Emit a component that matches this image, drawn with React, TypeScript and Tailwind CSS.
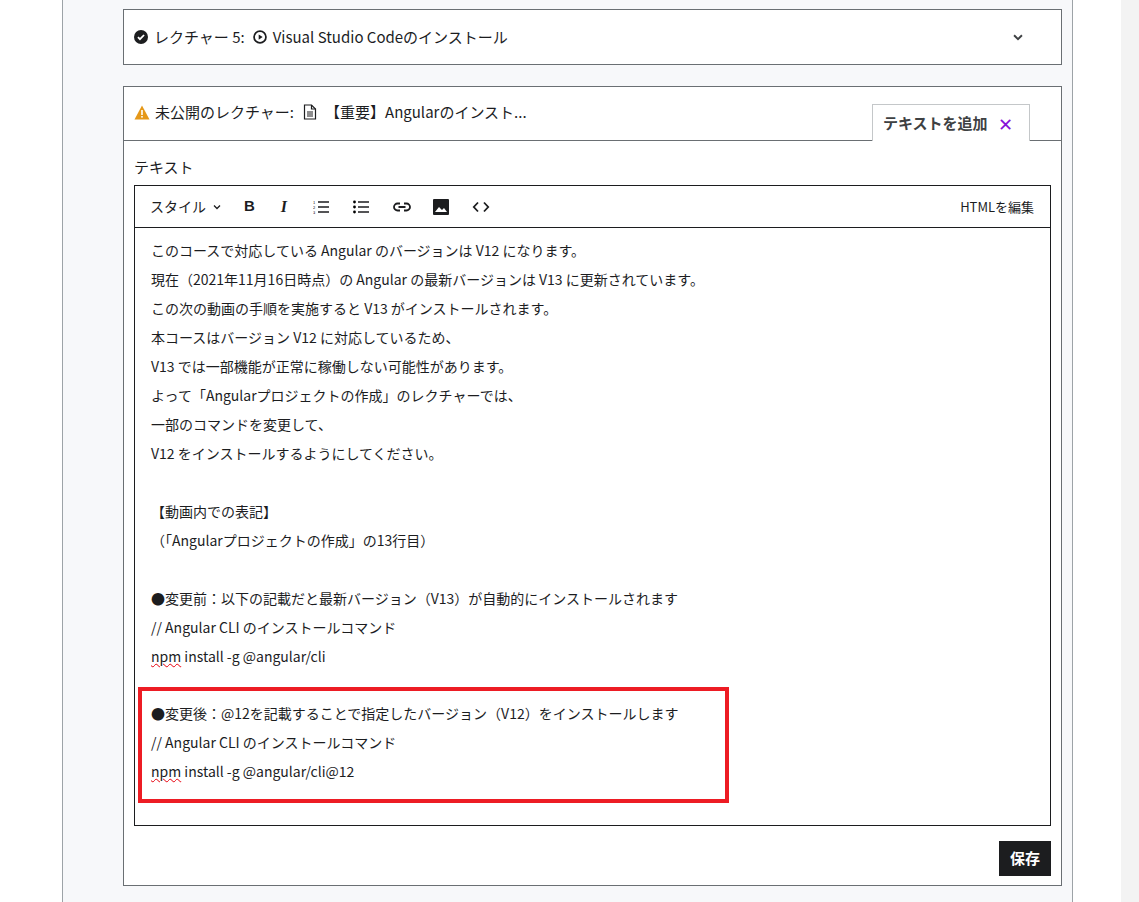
import React from "react";

const lines1 = [
  "このコースで対応している Angular のバージョンは V12 になります。",
  "現在（2021年11月16日時点）の Angular の最新バージョンは V13 に更新されています。",
  "この次の動画の手順を実施すると V13 がインストールされます。",
  "本コースはバージョン V12 に対応しているため、",
  "V13 では一部機能が正常に稼働しない可能性があります。",
  "よって「Angularプロジェクトの作成」のレクチャーでは、",
  "一部のコマンドを変更して、",
  "V12 をインストールするようにしてください。",
  "",
  "【動画内での表記】",
  "（「Angularプロジェクトの作成」の13行目）",
  "",
  "●変更前：以下の記載だと最新バージョン（V13）が自動的にインストールされます",
  "// Angular CLI のインストールコマンド",
];

const Npm = ({ rest }: { rest: string }) => (
  <div className="h-[29px] leading-[29px]">
    <span className="underline decoration-wavy decoration-red-600 decoration-1">npm</span> {rest}
  </div>
);

export default function App() {
  return (
    <div
      className="w-[1139px] h-[902px] bg-white flex overflow-hidden text-[#1c1d1f]"
      style={{ fontFamily: '"Noto Sans CJK JP", "Noto Sans", sans-serif' }}
    >
      <div className="w-[62px]" />
      <div className="w-[1011px] bg-[#f7f8fa] border-x border-[#9da3a7] pl-[60px] pr-[10px] pt-[9px] flex flex-col">
        <div className="h-[56px] bg-white border border-[#6a6f73] flex items-center pl-[10px] pr-[36px] text-[15px]">
          <svg width="14" height="14" viewBox="0 0 16 16" className="mr-[6px]">
            <circle cx="8" cy="8" r="8" fill="#1c1d1f" />
            <path d="M4.5 8.2l2.3 2.3 4.7-4.8" stroke="white" strokeWidth="2" fill="none" />
          </svg>
          <span>レクチャー 5:</span>
          <svg width="14" height="14" viewBox="0 0 16 16" className="ml-[8px] mr-[6px]">
            <circle cx="8" cy="8" r="6.8" fill="none" stroke="#1c1d1f" strokeWidth="2" />
            <path d="M6.5 5v6l4.5-3z" fill="#1c1d1f" />
          </svg>
          <span>Visual Studio Codeのインストール</span>
          <svg width="14" height="14" viewBox="0 0 16 16" className="ml-auto">
            <path d="M3.5 6l4.5 4.5L12.5 6" stroke="#3e4143" strokeWidth="2.2" fill="none" />
          </svg>
        </div>
        <div className="mt-[21px] h-[800px] bg-white border border-[#6a6f73] flex flex-col">
          <div className="h-[54px] flex items-end border-b border-[#6a6f73] relative">
            <div className="absolute left-[10px] top-[14px] flex items-center text-[15px]">
              <svg width="16" height="15" viewBox="0 0 16 15" className="mr-[5px]">
                <path d="M8 0.5L15.5 14.5H0.5z" fill="#e59819" />
                <rect x="7.2" y="5" width="1.6" height="5" fill="white" />
                <rect x="7.2" y="11" width="1.6" height="1.6" fill="white" />
              </svg>
              <span>未公開のレクチャー:</span>
              <svg width="14" height="16" viewBox="0 0 14 16" className="ml-[9px] mr-[8px]">
                <path d="M1.5 1h7l4 4v10h-11z" fill="none" stroke="#1c1d1f" strokeWidth="1.2" />
                <path d="M8.5 1v4h4" fill="none" stroke="#1c1d1f" strokeWidth="1.2" />
                <path d="M4 8h6M4 10h6M4 12h6" stroke="#1c1d1f" strokeWidth="1" />
              </svg>
              <span>【重要】Angularのインスト...</span>
            </div>
            <div className="ml-auto mr-[31px] mb-[-1px] h-[37px] w-[158px] bg-white border border-b-0 border-[#c4c7c9] flex items-center pl-[10px] gap-[10px] text-[15px] font-bold text-[#3e4143]">
              テキストを追加
              <span className="text-[#8710d8] font-normal text-[18px] leading-none">✕</span>
            </div>
          </div>
          <div className="px-[10px] pt-[14px] flex flex-col">
            <div className="text-[15px] h-[30px] leading-[24px]">テキスト</div>
            <div className="h-[641px] border border-[#1c1d1f] flex flex-col">
              <div className="h-[42px] border-b border-[#1c1d1f] flex items-center pl-[15px] pr-[16px] text-[#1c1d1f]">
                <span className="text-[14px]">スタイル</span>
                <svg width="10" height="10" viewBox="0 0 10 10" className="ml-[6px]"><path d="M2 3.5l3 3 3-3" stroke="#1c1d1f" strokeWidth="1.3" fill="none" /></svg>
                <span className="ml-[22px] font-bold text-[15px]" style={{ fontFamily: '"Liberation Sans", sans-serif' }}>B</span>
                <span className="ml-[26px] font-bold italic text-[16px]" style={{ fontFamily: '"Liberation Serif", serif' }}>I</span>
                <svg width="16" height="14" viewBox="0 0 16 14" className="ml-[26px]"><path d="M5 2h11M5 7h11M5 12h11" stroke="#1c1d1f" strokeWidth="1.6" /><text x="0" y="4" fontSize="4">1</text><text x="0" y="9" fontSize="4">2</text><text x="0" y="14" fontSize="4">3</text></svg>
                <svg width="16" height="14" viewBox="0 0 16 14" className="ml-[24px]"><path d="M5 2h11M5 7h11M5 12h11" stroke="#1c1d1f" strokeWidth="1.6" /><circle cx="1.5" cy="2" r="1.4" /><circle cx="1.5" cy="7" r="1.4" /><circle cx="1.5" cy="12" r="1.4" /></svg>
                <svg width="18" height="10" viewBox="0 0 18 10" className="ml-[24px]"><path d="M7 1.5H4.5a3.5 3.5 0 0 0 0 7H7M11 1.5h2.5a3.5 3.5 0 0 1 0 7H11M5.5 5h7" stroke="#1c1d1f" strokeWidth="1.8" fill="none" /></svg>
                <svg width="16" height="16" viewBox="0 0 16 16" className="ml-[22px]"><rect x="0" y="0" width="16" height="16" rx="1" fill="#1c1d1f" /><path d="M2 13l4-5 3 3 2-2 3 4z" fill="white" /></svg>
                <svg width="18" height="12" viewBox="0 0 18 12" className="ml-[23px]"><path d="M6 1.5L1.8 6 6 10.5M12 1.5L16.2 6 12 10.5" stroke="#1c1d1f" strokeWidth="1.8" fill="none" /></svg>
                <span className="ml-auto text-[13px]">HTMLを編集</span>
              </div>
              <div className="pl-[16px] pt-[8px] text-[14px]">
                {lines1.map((l, i) => (
                  <div key={i} className="h-[29px] leading-[29px]">{l || "\u00a0"}</div>
                ))}
                <Npm rest="install -g @angular/cli" />
                <div className="ml-[-13px] mt-[16px] w-[591px] h-[116px] border-[4px] border-[#ed1c24] pl-[9px] pt-[8px]">
                  <div className="h-[29px] leading-[29px]">●変更後：@12を記載することで指定したバージョン（V12）をインストールします</div>
                  <div className="h-[29px] leading-[29px]">// Angular CLI のインストールコマンド</div>
                  <Npm rest="install -g @angular/cli@12" />
                </div>
              </div>
            </div>
            <div className="flex justify-end mt-[15px]">
              <div className="w-[52px] h-[35px] bg-[#1c1d1f] text-white font-bold text-[15px] flex items-center justify-center">保存</div>
            </div>
          </div>
        </div>
      </div>
      <div className="w-[48px]" />
      <div className="flex-1 bg-[#f3f3f3]" />
    </div>
  );
}
